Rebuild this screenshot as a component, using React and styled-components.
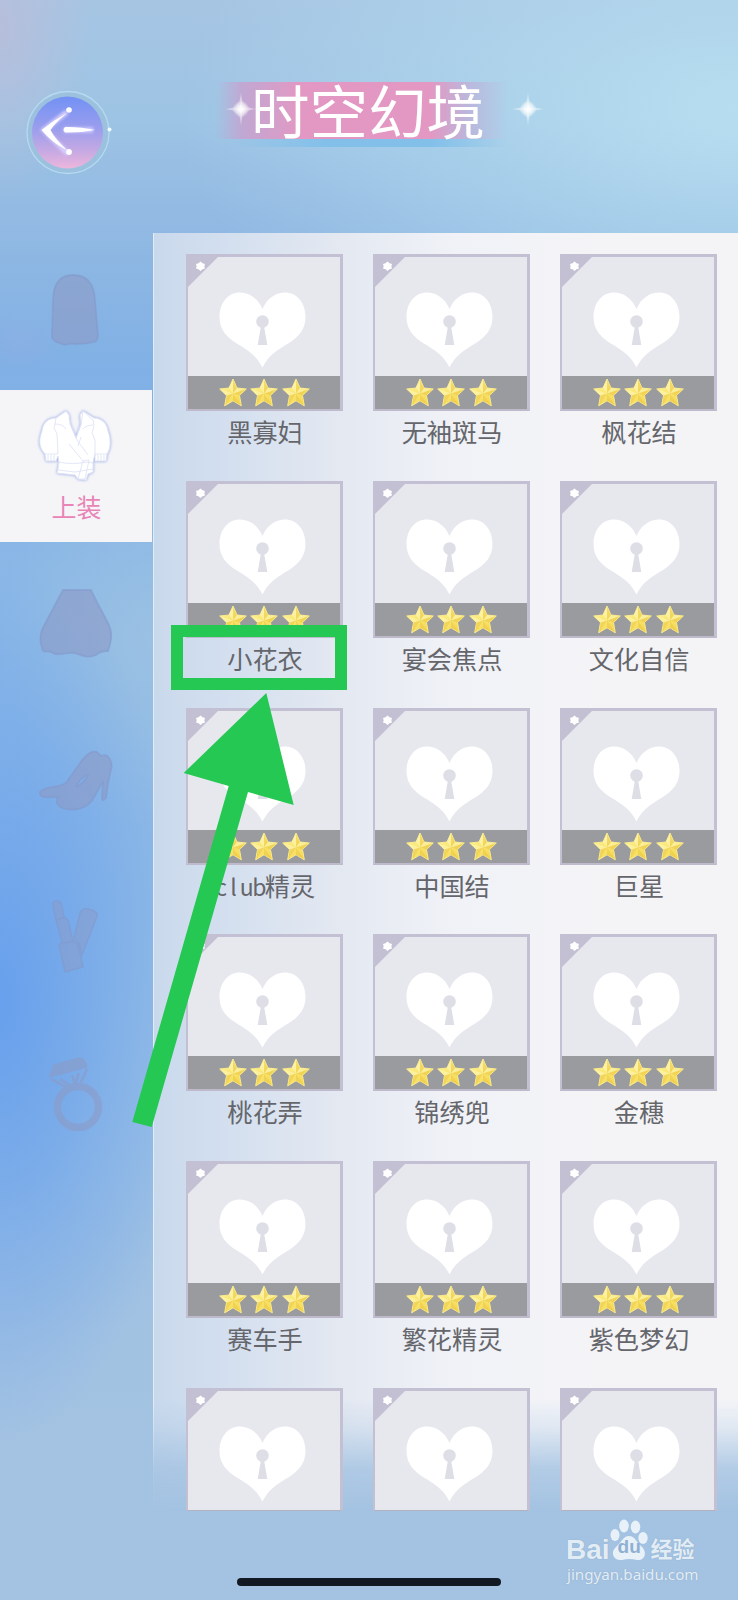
import React from "react";
import styled, { createGlobalStyle } from "styled-components";

const GlobalStyle = createGlobalStyle`
  * {
    box-sizing: border-box;
  }
  body {
    margin: 0;
    font-family: "Noto Sans CJK SC", sans-serif;
  }
`;

const Screen = styled.div`
  position: relative;
  display: flex;
  flex-direction: column;
  width: 738px;
  height: 1600px;
  overflow: hidden;
  background:
    radial-gradient(ellipse 90px 170px at 0 30px, rgba(190, 188, 216, 0.7), transparent),
    radial-gradient(ellipse 40px 30px at 20px 342px, rgba(156, 170, 226, 0.25), transparent),
    radial-gradient(ellipse 560px 300px at 738px 110px, rgba(184, 223, 240, 0.95), rgba(184, 223, 240, 0)),
    radial-gradient(ellipse 190px 440px at 0 1000px, #69a1ec 5%, rgba(105, 161, 236, 0.6) 45%, rgba(105, 161, 236, 0)),
    radial-gradient(ellipse 150px 190px at 150px 640px, rgba(160, 196, 226, 0.7), rgba(160, 196, 226, 0)),
    linear-gradient(
      180deg,
      #a6c5e3 0,
      #9dc4e4 120px,
      #93bae2 210px,
      #80b0e5 370px,
      #8bb8e6 600px,
      #90bae6 900px,
      #98bee5 1130px,
      #a2c2e2 1330px,
      #a4c3e2 1600px
    );
`;

const Header = styled.header`
  display: flex;
  align-items: flex-start;
  height: 232.500px;
  padding: 82px 0 0 24px;
`;

const BackButton = styled.button`
  width: 90px;
  height: 90px;
  margin-top: 5px;
  padding: 0;
  border: 0;
  background: none;
`;

const TitleBand = styled.div`
  display: flex;
  align-items: center;
  width: 325px;
  height: 66px;
  margin-left: 102px;
  background:
    linear-gradient(90deg, transparent, rgba(200, 160, 206, 0.8) 8%, #e298c3 26%, #e298c3 66%, rgba(196, 168, 212, 0.6) 78%, transparent 90%) 0 0 / 100% 57px
      no-repeat,
    linear-gradient(90deg, transparent 4%, #82c0ea 34%, #82c0ea 66%, transparent 90%) 0 57px / 100% 8px no-repeat;
`;

const Title = styled.h1`
  margin: -12px 22px 0 -10px;
  color: #fff;
  font-size: 58.500px;
  font-weight: 400;
  line-height: 60px;
  white-space: nowrap;
`;

const SparkleIcon = styled.svg`
  flex: none;
  width: 40px;
  height: 40px;
  margin: -12px 0 0 5px;

  h1 + & {
    margin-left: 1px;
  }
`;

const Body = styled.div`
  display: flex;
  flex: 1;
`;

const Sidebar = styled.nav`
  display: flex;
  flex-direction: column;
  gap: 5px;
  width: 153px;
`;

const Tab = styled.button`
  display: flex;
  flex-direction: column;
  align-items: center;
  justify-content: ${({ $active }) => ($active ? "flex-start" : "center")};
  width: 152px;
  height: 152px;
  padding: ${({ $active }) => ($active ? "14px 0 0" : "0 4px 0 0")};
  border: 0;
  background: ${({ $active }) => ($active ? "#f5f5f8" : "transparent")};
  color: #e884b6;
  font: 25px/34px "Noto Sans CJK SC", sans-serif;

  svg {
    flex: none;
    width: 90px;
    height: 90px;
  }
`;

const TabLabel = styled.span`
  margin: -5px 0 0 1px;
`;

const Panel = styled.main`
  width: 585px;
  border-left: 1px solid rgba(215, 229, 244, 0.6);
  background: linear-gradient(90deg, #c9d9ec 0, #d3dfef 70px, #e3e8f1 180px, #f0f2f7 300px, #f4f4f7 440px);
  mask-image: linear-gradient(
    180deg,
    #000 1165px,
    rgba(0, 0, 0, 0.75) 1195px,
    rgba(0, 0, 0, 0.2) 1235px,
    transparent 1280px
  );
`;

const Layer = styled.div`
  position: absolute;
  top: 254px;
  left: 186px;
  height: 1257px;
  overflow: hidden;
`;

const Grid = styled.div`
  display: grid;
  grid-template-columns: repeat(3, 157px);
  grid-auto-rows: 226.800px;
  column-gap: 30px;
`;

const Card = styled.article`
  display: flex;
  flex-direction: column;
  align-items: center;
`;

const Thumb = styled.div`
  display: flex;
  flex: none;
  flex-direction: column;
  justify-content: space-between;
  width: 157px;
  height: ${({ $cut }) => ($cut ? "123px" : "157px")};
  overflow: hidden;
  border: 2px solid #c4c0d3;
  border-top-width: 3px;
  border-right-width: 3px;
  border-bottom: ${({ $cut }) => ($cut ? "1px solid #b3b1bf" : "2px solid #bebacb")};
  background: #e7e8ee;

  & > svg {
    flex: none;
    display: block;
  }
`;

const StarBar = styled.div`
  display: flex;
  flex: none;
  align-items: center;
  justify-content: center;
  gap: 3.500px;
  height: 33px;
  background: #9a9b9f;
`;

const Name = styled.span`
  margin: 2px 0 0 1px;
  color: #65666b;
  font-size: 25.200px;
  line-height: 36px;
  white-space: nowrap;
`;

const Letter = styled.span`
  display: inline-block;
  width: 12.500px;
  text-align: center;
  font-size: 23px;
`;

const Highlight = styled.div`
  position: absolute;
  top: 625px;
  left: 171px;
  width: 176px;
  height: 65px;
  border: 12.500px solid #25c853;
`;

const Arrow = styled.svg`
  position: absolute;
  top: 690px;
  left: 130px;
`;

const Watermark = styled.div`
  position: absolute;
  top: 1518px;
  left: 566px;
  width: 136px;
  color: rgba(240, 247, 252, 0.9);
  text-shadow: 0 0 1px rgba(100, 130, 160, 0.5);
`;

const Brand = styled.div`
  display: flex;
  align-items: flex-end;
  height: 45px;
`;

const BrandText = styled.span`
  font: 700 ${({ $size }) => $size}px/26px "Liberation Sans", "Noto Sans CJK SC", sans-serif;
`;

const Paw = styled.span`
  position: relative;
  width: 38px;
  height: 47px;
  margin: 0 3px 0 0;
`;

const PawText = styled.b`
  position: absolute;
  top: 20px;
  left: 8px;
  color: #8fb0d2;
  font: 700 19px/22px "Liberation Sans", sans-serif;
  text-shadow: none;
`;

const Url = styled.div`
  margin: 3px 0 0 1px;
  font: 15.200px/17px "Noto Sans", sans-serif;
`;

const HomeBar = styled.div`
  position: absolute;
  bottom: 14px;
  left: 237px;
  width: 264px;
  height: 8px;
  border-radius: 4px;
  background: #121923;
`;

const items = [
  "黑寡妇",
  "无袖斑马",
  "枫花结",
  "小花衣",
  "宴会焦点",
  "文化自信",
  "club精灵",
  "中国结",
  "巨星",
  "桃花弄",
  "锦绣兜",
  "金穗",
  "赛车手",
  "繁花精灵",
  "紫色梦幻",
  "",
  "",
  "",
];

const BackIcon = () => (
  <svg width="90" height="90" viewBox="0 0 90 90">
    <defs>
      <linearGradient id="orb" x1="0" y1="0" x2="0" y2="1">
        <stop offset="0" stopColor="#7291f5" />
        <stop offset="0.45" stopColor="#9b9eed" />
        <stop offset="0.75" stopColor="#c5a9e3" />
        <stop offset="1" stopColor="#edb6dc" />
      </linearGradient>
      <filter id="glow" x="-50%" y="-50%" width="200%" height="200%">
        <feGaussianBlur stdDeviation="1.8" />
      </filter>
    </defs>
    <circle cx="44" cy="45.500" r="40" fill="#9cc1de" />
    <circle cx="44" cy="45.500" r="41" fill="none" stroke="#b5daf0" strokeWidth="1.300" />
    <ellipse cx="43.500" cy="45.500" rx="35.500" ry="36" fill="url(#orb)" />
    <g stroke="#d8cfff" strokeWidth="5" fill="none" filter="url(#glow)">
      <path d="M43 25 20 43 44 67M40 43H69" />
    </g>
    <path d="M43 26 Q30 33 17.500 43 Q28 56 43.500 63.500 Q31 52 26.500 43 Q31 36 43 26Z" fill="#fff" />
    <path d="M41 40 Q55 39.500 71 43 Q55 46 41 45.500 Q38 43 41 40Z" fill="#fff" />
    <circle cx="45" cy="23" r="2.800" fill="#fff" />
    <circle cx="45" cy="65" r="2.900" fill="#fff" />
    <circle cx="85.500" cy="42.500" r="2" fill="#edfaff" />
  </svg>
);

const Sparkle = () => (
  <SparkleIcon viewBox="0 0 40 40">
    <defs>
      <radialGradient id="flare">
        <stop offset="0" stopColor="#fff" />
        <stop offset="0.35" stopColor="#fff" stopOpacity="0.8" />
        <stop offset="1" stopColor="#fff" stopOpacity="0" />
      </radialGradient>
    </defs>
    <circle cx="20" cy="20" r="8.500" fill="url(#flare)" />
    <path
      d="M20 3Q20 19.500 36 20Q20 20.500 20 37Q20 20.500 4 20Q20 19.500 20 3Z"
      fill="#fff"
      opacity="0.3"
    />
    <path d="M20 3 20.800 20 20 37 19.200 20ZM4 20 20 19.200 36 20 20 20.800Z" fill="#fff" opacity="0.6" />
  </SparkleIcon>
);

const TopIcon = () => (
  <svg viewBox="0 0 90 90">
    <defs>
      <filter id="halo" x="-20%" y="-20%" width="140%" height="140%">
        <feDropShadow dx="0" dy="0" stdDeviation="1.8" floodColor="#7f94dc" floodOpacity="0.9" />
      </filter>
    </defs>
    <g fill="#fff" stroke="#dce1f5" strokeWidth="0.800" strokeLinejoin="round">
      <path
        filter="url(#halo)"
        d="M35 7 25 14C17 14 12 19 11 27 8 35 8 41 11 46L14 50 15 57H25L27 52 28 60 26 69 44 71 47 75 55 76 57 70 62 68 62 58 64 50 64 57H75L76 50C80 44 80 35 77 27 76 19 70 14 63 14L52 7 49 11 50 20 45 34 39 20 38 11Z"
      />
      <path
        d="M35 7 25 14 24 20Q32 20 35 25M52 7 50 21 45 34M52 7 62 16 63 21Q55 21 52 25M38 14 46 36 57 51M50 33 47 42M24 20 23 24 26 30 27 50M63 22 61 29 64 36 64 50"
        fill="none"
      />
      <path d="M28 58Q40 61 57 58L62 59 62 65 44 68 27 66ZM52 57 58 56 54 75 47 75Z" />
      <path d="M14 50H27M17 51V57M20 51V57M23 51V57M64 50H76M67 51V57M70 51V57M73 51V57M38 40 53 58" fill="none" />
    </g>
  </svg>
);

const silhouettes = {
  hair: "M24 38C24 18 32 11 44 11S65 18 66 36L68 60 69 71Q69 77 65 78C57 80 53 80 47 80C41 79 39 80 36 81C30 79 24 78 23 73Z",
  skirt:
    "M34 12H62L68 24 80 47C84 56 82 64 79 73 72 73 69 75 67 77 58 81 53 77 45 75 36 74 28 79 22 74 18 72 14 76 13 70 9 60 12 52 17 44Z",
  shoes:
    "M11 57C15 51 30 53 37 48L51 28C57 20 62 15 68 17L72 21C80 17 84 28 82 35L79 48 77 63Q73 68 73 62L74 46 63 66C55 75 43 76 33 73 27 70 27 65 29 62 20 62 10 64 11 57ZM47 52Q54 49 59 40Q52 42 47 52",
};

const Silhouette = ({ d }) => (
  <svg viewBox="0 0 90 90">
    <path d={d} fill="#8c9bc7" fillOpacity="0.62" stroke="#8299cb" strokeWidth="1.800" strokeOpacity="0.6" />
  </svg>
);

const LipstickIcon = () => (
  <svg viewBox="0 -1 90 90">
    <g fill="#8c9bc7" fillOpacity="0.5" stroke="#8299cb" strokeWidth="1.500" strokeOpacity="0.6">
      <path d="M51 20Q54 14 60 16L65 18Q70 20 67 26L53 62 50 50 45 45Z" />
      <path d="M24 13Q23 8 28 8 33 8 33 14L35 24 39 27 44 48 49 51 54 74 36 79 30 52 33 49 27 27Z" />
      <path d="M27 27 36 24M32 51 45 48" fill="none" />
    </g>
  </svg>
);

const RingIcon = () => (
  <svg viewBox="0 -1 90 90">
    <g fill="none" stroke="#8c9bc7" strokeLinejoin="round" opacity="0.6">
      <circle cx="49" cy="57" r="20.500" strokeWidth="7.500" />
      <path d="M21 24 25 15 50 8Q56 8 58 17L21 27Z" fill="#8c9bc7" strokeWidth="1.500" />
      <path d="M22 29 37 37M58 19 51 34M31 29 42 36M43 25 46 34 50 23" strokeWidth="2.800" />
    </g>
  </svg>
);

const LockedHeart = () => (
  <svg width="152" height="119" viewBox="188 257 152 119">
    <path d="M188 256H219L188 287Z" fill="#c4c0d3" />
    <path
      d="M200.500 261.500 202.500 263.200 205 264 204.300 266.200 205 268.500 202.500 269.200 200.500 271 198.500 269.200 196 268.500 196.700 266.200 196 264 198.500 263.200Z"
      fill="#fff"
    />
    <path
      d="M262.500 309C258 298 249 292.500 240 292.500 228 292.500 219.500 303 219.500 317 219.500 330 227 337 236 343 248 350 257 356 262.500 367.500 268 356 277 350 289 343 298 337 305.500 330 305.500 317 305.500 303 297 292.500 285 292.500 276 292.500 267 298 262.500 309Z"
      fill="#fff"
    />
    <circle cx="262.500" cy="321.500" r="6.300" fill="#dedfe6" />
    <path d="M261 326H264L267.300 345H257.700Z" fill="#dedfe6" />
  </svg>
);

const Star = () => (
  <svg width="28" height="29" viewBox="0 0 28 29">
    <defs>
      <linearGradient id="gold" x1="0" y1="0" x2="0.700" y2="1">
        <stop offset="0" stopColor="#fdf6ae" />
        <stop offset="0.5" stopColor="#fae873" />
        <stop offset="1" stopColor="#f3d650" />
      </linearGradient>
    </defs>
    <path
      d="M14 1 18 10 27.300 11 20.500 17.500 22.300 27.800 14 22.800 5.700 27.800 7.500 17.500.700 11 10 10Z"
      fill="url(#gold)"
      stroke="#fbeb8c"
      strokeWidth="1"
      strokeLinejoin="round"
    />
    <path
      d="M14 15.500V2L18 10ZM14 15.500 26 11.500 20.500 17.500ZM14 15.500 21.500 27 14 22.800ZM14 15.500 6.500 27 7.500 17.500Z"
      fill="#e8bd3c"
      opacity="0.400"
    />
    <path d="M14 15.500V2L10 10ZM14 15.500 2 11.500 7.500 17.500ZM14 15.500 18 10 26 11.500Z" fill="#fffbd0" opacity="0.450" />
  </svg>
);

const ItemName = ({ name }) => (
  <Name>
    {[...name].map((char, i) => (/[a-z]/.test(char) ? <Letter key={i}>{char}</Letter> : char))}
  </Name>
);

const ItemCard = ({ name }) => (
  <Card>
    <Thumb $cut={!name}>
      <LockedHeart />
      {name && (
        <StarBar>
          <Star />
          <Star />
          <Star />
        </StarBar>
      )}
    </Thumb>
    {name && <ItemName name={name} />}
  </Card>
);

const App = () => {
  return (
    <Screen>
      <GlobalStyle />
      <Header>
        <BackButton aria-label="返回">
          <BackIcon />
        </BackButton>
        <TitleBand>
          <Sparkle />
          <Title>时空幻境</Title>
          <Sparkle />
        </TitleBand>
      </Header>

      <Body>
        <Sidebar>
          <Tab>
            <Silhouette d={silhouettes.hair} />
          </Tab>
          <Tab $active>
            <TopIcon />
            <TabLabel>上装</TabLabel>
          </Tab>
          <Tab>
            <Silhouette d={silhouettes.skirt} />
          </Tab>
          <Tab>
            <Silhouette d={silhouettes.shoes} />
          </Tab>
          <Tab>
            <LipstickIcon />
          </Tab>
          <Tab>
            <RingIcon />
          </Tab>
        </Sidebar>
        <Panel />
      </Body>

      {/* the cards stay solid where the panel behind them fades out */}
      <Layer>
        <Grid>
          {items.map((name, i) => (
            <ItemCard key={i} name={name} />
          ))}
        </Grid>
      </Layer>

      <Highlight />
      <Arrow width="170" height="440" viewBox="130 690 170 440">
        <path d="M266.300 693 293.700 805 248 792 151.700 1127 132.300 1122 228.700 786 183.700 773Z" fill="#25c853" />
      </Arrow>

      <Watermark>
        <Brand>
          <BrandText $size={28}>Bai</BrandText>
          <Paw>
            <svg width="38" height="47" viewBox="0 0 38 47" fill="#e8f1f8">
              <ellipse cx="5" cy="19" rx="4.500" ry="6" />
              <ellipse cx="14" cy="10" rx="4.800" ry="6.500" />
              <ellipse cx="25.500" cy="11" rx="4.800" ry="6.500" />
              <ellipse cx="33" cy="22" rx="4.700" ry="6" />
              <path d="M19 20C25 20 26 26 31 30 38 36 35 45 27 44Q19 42 12 44C3 45 0 36 6 31 12 26 13 20 19 20Z" />
            </svg>
            <PawText>du</PawText>
          </Paw>
          <BrandText $size={22}>经验</BrandText>
        </Brand>
        <Url>jingyan.baidu.com</Url>
      </Watermark>
      <HomeBar />
    </Screen>
  );
};

export default App;
